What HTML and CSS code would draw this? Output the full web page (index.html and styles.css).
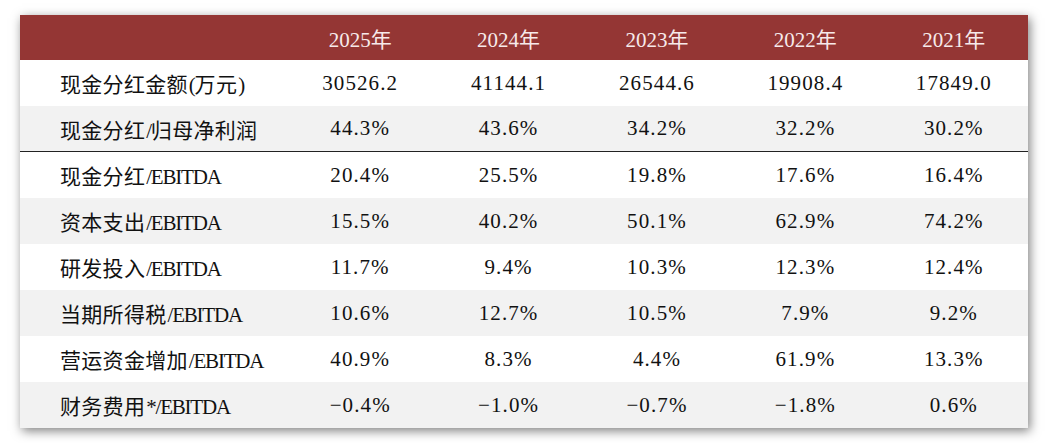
FILE: index.html
```html
<!DOCTYPE html>
<html lang="zh-CN">
<head>
<meta charset="utf-8">
<link rel="stylesheet" href="styles.css">
</head>
<body>
<div class="frame">
<table class="data">
  <thead>
    <tr class="head"><th class="label"></th><th>2025年</th><th>2024年</th><th>2023年</th><th>2022年</th><th>2021年</th></tr>
  </thead>
  <tbody>
    <tr><td class="label">现金分红金额<span class="en">(</span>万元<span class="en">)</span></td><td>30526.2</td><td>41144.1</td><td>26544.6</td><td>19908.4</td><td>17849.0</td></tr>
    <tr class="alt rule"><td class="label">现金分红<span class="en">/</span>归母净利润</td><td>44.3%</td><td>43.6%</td><td>34.2%</td><td>32.2%</td><td>30.2%</td></tr>
    <tr><td class="label">现金分红<span class="en">/EBITDA</span></td><td>20.4%</td><td>25.5%</td><td>19.8%</td><td>17.6%</td><td>16.4%</td></tr>
    <tr class="alt"><td class="label">资本支出<span class="en">/EBITDA</span></td><td>15.5%</td><td>40.2%</td><td>50.1%</td><td>62.9%</td><td>74.2%</td></tr>
    <tr><td class="label">研发投入<span class="en">/EBITDA</span></td><td>11.7%</td><td>9.4%</td><td>10.3%</td><td>12.3%</td><td>12.4%</td></tr>
    <tr class="alt"><td class="label">当期所得税<span class="en">/EBITDA</span></td><td>10.6%</td><td>12.7%</td><td>10.5%</td><td>7.9%</td><td>9.2%</td></tr>
    <tr><td class="label">营运资金增加<span class="en">/EBITDA</span></td><td>40.9%</td><td>8.3%</td><td>4.4%</td><td>61.9%</td><td>13.3%</td></tr>
    <tr class="alt"><td class="label">财务费用<span class="en">*/EBITDA</span></td><td>−0.4%</td><td>−1.0%</td><td>−0.7%</td><td>−1.8%</td><td>0.6%</td></tr>
  </tbody>
</table>
</div>
</body>
</html>
```
FILE: styles.css
```css
html, body {
  margin: 0;
  padding: 0;
  background: #ffffff;
}
body {
  padding: 15px 0 15px 20px;
  font-family: "Liberation Serif", "Noto Sans CJK SC", serif;
  font-size: 21px;
  color: #111111;
}
.frame {
  width: 1008px;
  box-shadow: 2px 3px 10px rgba(0, 0, 0, 0.5);
  background: #ffffff;
}
.data {
  width: 1008px;
  border-collapse: collapse;
  table-layout: fixed;
}
.data th, .data td {
  padding: 0;
  text-align: center;
  font-weight: 400;
  white-space: nowrap;
  letter-spacing: 1.1px;
}
.data th {
  height: 45px;
  background: #943634;
  color: #f7eaea;
  letter-spacing: 0;
}
.data td {
  height: 46px;
}
.data .label {
  width: 226px;
  padding-left: 40px;
  text-align: left;
  letter-spacing: 0.3px;
}
.label .en {
  letter-spacing: -1.2px;
  padding-left: 1px;
}
.alt td {
  background: #f2f2f2;
}
.rule td {
  height: 45px;
  border-bottom: 1px solid #222222;
}
```
